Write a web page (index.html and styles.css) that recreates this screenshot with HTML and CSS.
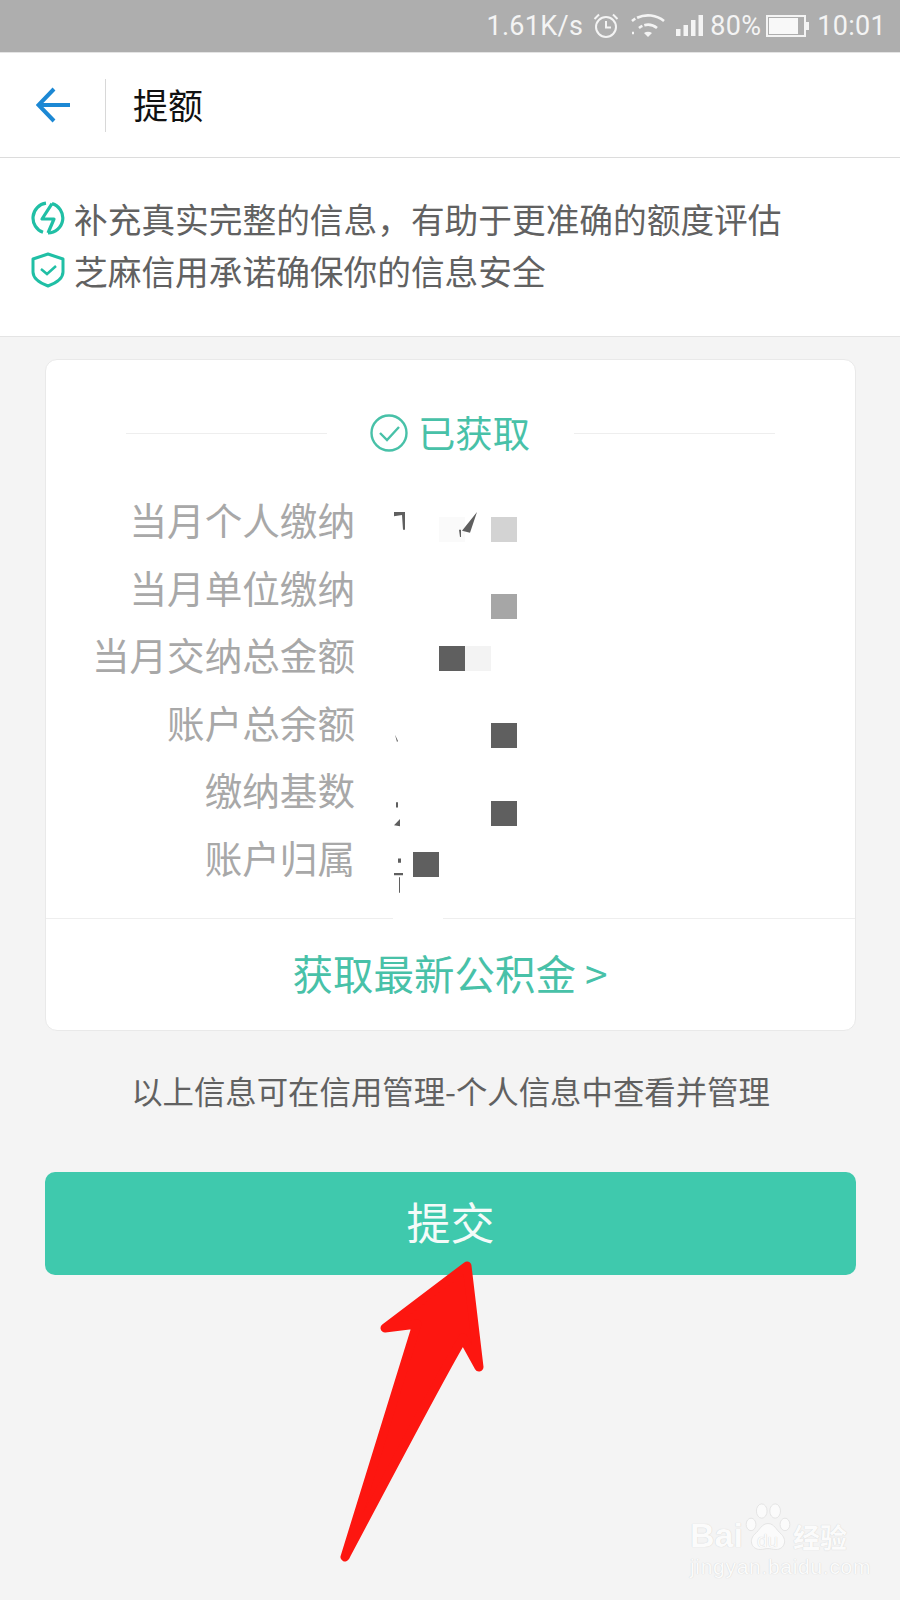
FILE: index.html
```html
<!DOCTYPE html>
<html lang="zh-CN">
<head>
  <meta charset="UTF-8">
  <title>提额</title>
  <link rel="stylesheet" href="styles.css">
</head>
<body>
  <!-- status bar -->
  <div class="status-bar">
    <span>1.61K/s</span>
    <svg class="ic-alarm" width="28" height="28" viewBox="0 0 28 28" fill="none" stroke="#f4f4f4" stroke-width="2">
      <circle cx="14" cy="15" r="10"/>
      <path d="M14 9v6.5h5M2.5 7 7 2.5M25.5 7 21 2.5"/>
    </svg>
    <svg class="ic-wifi" width="34" height="26" viewBox="0 0 34 26" fill="none" stroke="#f4f4f4" stroke-width="2.600">
      <path d="M1 8C10 .5 24 .5 33 8M8 15c5.500-4.500 12.500-4.500 18 0" stroke-dasharray="4 2 60"/>
      <path d="M13 20c2.500-1.600 5.500-1.600 8 0l-4 4z" fill="#f4f4f4" stroke="none"/>
      <path d="M1 20h3" stroke-dasharray="2 1"/>
    </svg>
    <svg class="ic-signal" width="28" height="22" viewBox="0 0 28 22" fill="#f4f4f4">
      <rect x="0" y="14" width="4.500" height="7"/>
      <rect x="7.500" y="10" width="4.500" height="11"/>
      <rect x="15" y="5" width="4.500" height="16"/>
      <rect x="22.500" y="0" width="4.500" height="21"/>
    </svg>
    <span class="pct">80%</span>
    <svg class="ic-battery" width="44" height="22" viewBox="0 0 44 22">
      <rect x="1" y="1" width="38" height="20" fill="none" stroke="#f4f4f4" stroke-width="2"/>
      <rect x="3" y="3" width="29" height="16" fill="#f8f8f8"/>
      <rect x="40" y="7" width="3" height="8" fill="#f4f4f4"/>
    </svg>
    <span>10:01</span>
  </div>

  <!-- header -->
  <div class="top-nav">
    <svg class="back" width="34" height="36" viewBox="0 0 34 36" fill="none" stroke="#1c88d4" stroke-width="4">
      <path d="M34 18H3M18 2 2.500 18 18 34"/>
    </svg>
    <div class="nav-sep"></div>
    <h1>提额</h1>
  </div>

  <div class="tips">
    <div class="tip">
      <svg width="34" height="34" viewBox="0 0 34 34" fill="none" stroke="#20bfa5" stroke-width="3.200">
        <path d="M15 2.200A15 15 0 0 0 12 31.200M21 2.600A15 15 0 0 1 17 32"/>
        <path d="M21 2.600 11 18H23L17 32" stroke-linejoin="round"/>
      </svg>
      <span>补充真实完整的信息，有助于更准确的额度评估</span>
    </div>
    <div class="tip">
      <svg width="34" height="36" viewBox="0 0 34 36" fill="none" stroke="#20bfa5" stroke-width="3">
        <path d="M17 2 32 7v13c0 6-7 11-15 14C9 31 2 26 2 20V7z" stroke-linejoin="round"/>
        <path d="M10 17l6 5 9-8" stroke-width="2.500"/>
      </svg>
      <span>芝麻信用承诺确保你的信息安全</span>
    </div>
  </div>

  <div class="content">
    <div class="card">
      <div class="card-title">
        <div class="title-line"></div>
        <svg width="38" height="38" viewBox="0 0 38 38" fill="none" stroke="#48c1a8" stroke-width="2.400">
          <circle cx="19" cy="19" r="17.500"/>
          <path d="M10 19l7 7 12-13"/>
        </svg>
        <span>已获取</span>
        <div class="title-line"></div>
      </div>

      <div class="rows">
        <div class="row">当月个人缴纳</div>
        <div class="row">当月单位缴纳</div>
        <div class="row">当月交纳总金额</div>
        <div class="row">账户总余额</div>
        <div class="row">缴纳基数</div>
        <div class="row">账户归属</div>
      </div>

      <div class="card-action">获取最新公积金 &gt;</div>

      <!-- mosaic over the private values -->
      <div class="tile t1"></div>
      <div class="tile t2"></div>
      <div class="tile t3"></div>
      <div class="tile t4"></div>
      <div class="tile t5"></div>
      <div class="tile t6"></div>
      <div class="tile t7"></div>
      <div class="tile t8"></div>
      <div class="line-gap"></div>
      <svg class="scraps" width="100" height="385" viewBox="0 0 100 370" preserveAspectRatio="none" fill="#5f5f5f">
        <path d="M0 0l11-3v20l-2 0-1-14-8 1zM68 18l15-18-7 20zM65 17l2 0 0 7-1 0z"/>
        <path d="M1 214l3 6-1 1zM2 279l2 0 0 5-2 0zM0 301l6-6 0 7zM4 333l3 0 0 4-3 0zM0 347l9 0 0 2-9 0zM5 351l1 0 0 15-1 0z"/>
      </svg>
    </div>

    <p class="note">以上信息可在信用管理-个人信息中查看并管理</p>
    <button class="submit">提交</button>
  </div>

  <!-- annotation arrow -->
  <svg class="arrow" width="160" height="320" viewBox="0 0 160 320">
    <path d="M128 10 140 111 124 82C110 104 72 176 6 301L78 68 46 72z" fill="#fd1610" stroke="#fd1610" stroke-width="9" stroke-linejoin="round"/>
  </svg>

  <!-- watermark -->
  <div class="watermark">
    <div class="wm-top">
      <span class="wm-bai">Bai</span>
      <svg class="wm-paw" width="48" height="50" viewBox="0 0 50 56" fill="#fbfbfb" stroke="#e2e2e2">
        <ellipse cx="6" cy="24" rx="5.500" ry="7"/>
        <ellipse cx="18" cy="9" rx="6" ry="8"/>
        <ellipse cx="33" cy="9" rx="6" ry="8"/>
        <ellipse cx="44" cy="24" rx="5.500" ry="7"/>
        <path d="M25 23c7 0 9 7 15 12 7 7 3 17-6 17-4 0-6-1-9-1s-5 1-9 1c-9 0-13-10-6-17 6-5 8-12 15-12z"/>
      </svg>
      <span class="wm-du">du</span>
      <span class="wm-cn">经验</span>
    </div>
    <div class="wm-url">jingyan.baidu.com</div>
  </div>
</body>
</html>
```

FILE: styles.css
```css
* {
  box-sizing: border-box;
}
html, body {
  margin: 0;
  padding: 0;
}
body {
  width: 900px;
  height: 1600px;
  position: relative;
  overflow: hidden;
  background-color: #f4f4f4;
  font-family: "Noto Sans CJK SC", "Noto Sans", sans-serif;
}
.status-bar {
  height: 53px;
  background-color: #aeaeae;
  border-bottom: 1px solid #e4e4e4;
  color: #f4f4f4;
  font-family: Roboto, sans-serif;
  font-size: 27px;
  letter-spacing: 0.3px;
  display: flex;
  align-items: center;
  justify-content: flex-end;
  padding-right: 14px;
}
.ic-alarm {
  margin-left: 9px;
}
.ic-wifi {
  margin-left: 11px;
}
.ic-signal {
  margin-left: 11px;
}
.pct {
  margin-left: 6px;
}
.ic-battery {
  margin-left: 5px;
  margin-right: 7px;
}
.top-nav {
  height: 105px;
  background-color: #fff;
  border-bottom: 1px solid #dcdcdc;
  display: flex;
  align-items: center;
  padding-left: 36px;
}
.nav-sep {
  width: 1px;
  height: 53px;
  background-color: #d8d8d8;
  margin-left: 35px;
}
.top-nav h1 {
  margin: 0 0 3px 27px;
  font-size: 35px;
  font-weight: 400;
  color: #111;
  line-height: 1;
}
.tips {
  height: 179px;
  background-color: #fff;
  border-bottom: 1px solid #e4e4e4;
  padding: 35px 0 0 31px;
  display: flex;
  flex-direction: column;
  gap: 2px;
}
.tip {
  height: 50px;
  display: flex;
  align-items: center;
  gap: 9px;
  font-size: 33.700px;
  color: #616161;
  white-space: nowrap;
}
.content {
  padding: 22px 44px 0 45px;
}
.card {
  position: relative;
  height: 672px;
  background-color: #fff;
  border: 1px solid #e9e9e9;
  border-radius: 12px;
}
.card-title {
  height: 72px;
  margin: 37px 80px 0;
  display: flex;
  align-items: center;
  color: #48c1a8;
  font-size: 37.300px;
  white-space: nowrap;
}
.card-title svg {
  margin-left: 43px;
  margin-right: 10px;
}
.card-title span {
  margin-right: 44px;
  margin-bottom: 2px;
}
.title-line {
  flex: 1;
  height: 1px;
  background-color: #eee;
}
.rows {
  margin-top: 16px;
  height: 434px;
  border-bottom: 1px solid #eee;
}
.row {
  height: 67.600px;
  width: 309px;
  text-align: right;
  font-size: 37.600px;
  line-height: 67.600px;
  color: #a8a8a8;
  white-space: nowrap;
}
.card-action {
  height: 111px;
  padding-bottom: 4px;
  display: flex;
  align-items: center;
  justify-content: center;
  padding-right: 1px;
  font-size: 40.500px;
  color: #48c1a8;
}
.tile {
  position: absolute;
  width: 26px;
  height: 25px;
}
.t1 { left: 445px; top: 157px; background-color: #d3d3d3; }
.t2 { left: 445px; top: 234px; background-color: #a6a6a6; }
.t3 { left: 393px; top: 286px; background-color: #5f5f5f; }
.t4 { left: 419px; top: 286px; background-color: #f3f3f3; }
.t5 { left: 445px; top: 363px; background-color: #5f5f5f; }
.t6 { left: 445px; top: 441px; background-color: #5f5f5f; }
.t7 { left: 367px; top: 492px; background-color: #5f5f5f; }
.t8 { left: 393px; top: 157px; background-color: #fafafa; }
.line-gap {
  position: absolute;
  left: 347px;
  top: 550px;
  width: 50px;
  height: 14px;
  background-color: #fff;
}
.scraps {
  position: absolute;
  left: 348px;
  top: 152px;
}
.note {
  margin: 0;
  height: 141px;
  padding-top: 38px;
  text-align: center;
  font-size: 31.400px;
  line-height: 44px;
  color: #616161;
  white-space: nowrap;
}
.submit {
  display: block;
  width: 100%;
  height: 103px;
  padding-bottom: 6px;
  border: none;
  border-radius: 10px;
  background-color: #3fc9ad;
  color: #f4fbf9;
  font-family: inherit;
  font-size: 44px;
}
.arrow {
  position: absolute;
  left: 339px;
  top: 1256px;
}
.watermark {
  position: absolute;
  left: 690px;
  top: 1503px;
  width: 170px;
  color: #fbfbfb;
  text-shadow: 0 0 1px #c8c8c8;
}
.wm-top {
  position: relative;
  height: 52px;
  display: flex;
  align-items: flex-end;
  font-family: "Liberation Sans", sans-serif;
  font-weight: 700;
  font-size: 34px;
  line-height: 40px;
}
.wm-paw {
  position: absolute;
  left: 54px;
  top: 0;
}
.wm-du {
  position: absolute;
  left: 67px;
  bottom: 4px;
  font-size: 19px;
  line-height: 20px;
  font-weight: 400;
}
.wm-cn {
  position: absolute;
  left: 103px;
  bottom: -2px;
  font-family: "Noto Sans CJK SC", sans-serif;
  font-size: 27px;
}
.wm-url {
  font-family: "Liberation Sans", sans-serif;
  font-size: 21px;
  line-height: 24px;
  letter-spacing: 0.7px;
  white-space: nowrap;
}
```
